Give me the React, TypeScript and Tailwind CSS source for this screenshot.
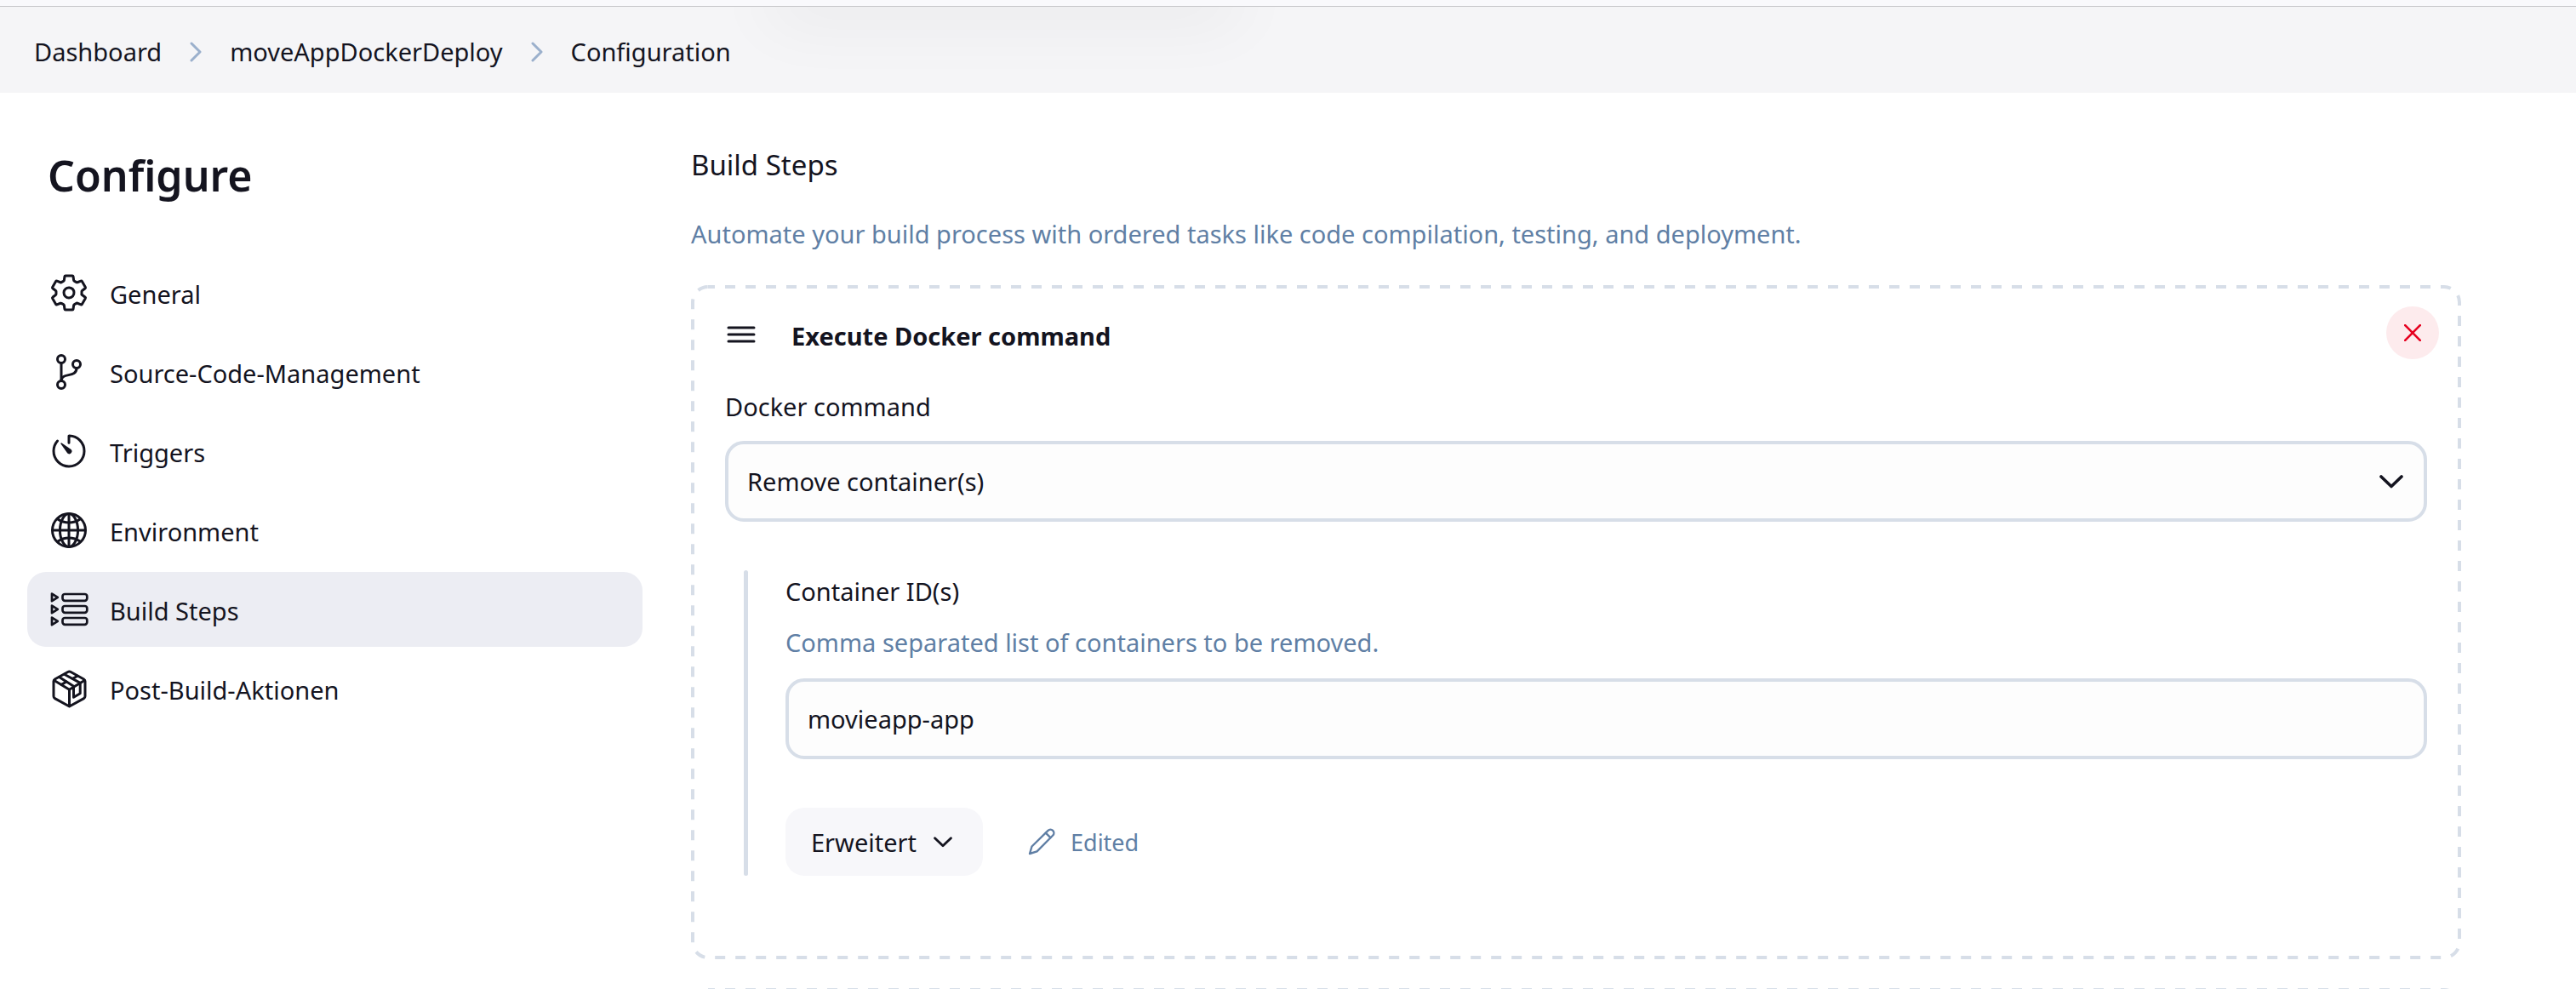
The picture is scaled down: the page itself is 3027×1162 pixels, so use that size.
import type { ReactNode } from 'react'
import {
  IoGitBranchOutline,
  IoGlobeOutline,
  IoSettingsOutline,
  IoTimerOutline,
} from 'react-icons/io5'

function Chevron({ direction, className }: { direction: 'right' | 'down'; className: string }) {
  return direction === 'right' ? (
    <svg viewBox="0 0 14 24" className={className} fill="none" stroke="currentColor" strokeWidth="3" strokeLinecap="round" strokeLinejoin="round" aria-hidden="true">
      <path d="M2 2l10 10L2 22" />
    </svg>
  ) : (
    <svg viewBox="0 0 28 16" className={className} fill="none" stroke="currentColor" strokeWidth="3.6" strokeLinecap="round" strokeLinejoin="round" aria-hidden="true">
      <path d="M2 2l12 11.5L26 2" />
    </svg>
  )
}

function StepsIcon() {
  return (
    <svg viewBox="0 0 48 48" className="size-12" fill="none" stroke="currentColor" strokeWidth="2.7" strokeLinejoin="round" aria-hidden="true">
      {[0, 14, 28].map((y) => (
        <g key={y} transform={`translate(0 ${y})`}>
          <path d="M4 5.600L10.800 9.900L4 14.200z" />
          <rect x="16.5" y="6" width="28.8" height="7.8" rx="2.8" />
        </g>
      ))}
    </svg>
  )
}

function PackageIcon() {
  return (
    <svg viewBox="0 0 48 48" className="size-12" fill="none" stroke="currentColor" strokeWidth="3" strokeLinecap="round" strokeLinejoin="round" aria-hidden="true">
      <path d="M22.800 4.500L7.500 13a3 3 0 0 0-1.500 2.600V33a3 3 0 0 0 1.500 2.600L24.500 45L41.500 35.600A3 3 0 0 0 43 33V15.600A3 3 0 0 0 41.500 13L26.200 4.500a3.500 3.500 0 0 0-3.400 0z" />
      <path d="M6.800 14.500L24.500 25.200L42.200 14.500M24.500 25.200V44" />
      <path d="M12.600 10.500L29.500 21.200V34.200L37.200 29.800V17.400L18.600 7.200" />
      <path d="M15.200 19.400L21 16M28.500 12.200L34 9.200" />
    </svg>
  )
}

function PencilIcon() {
  return (
    <svg viewBox="0 0 32 32" className="size-8" fill="none" stroke="currentColor" strokeWidth="2.4" strokeLinecap="round" strokeLinejoin="round" aria-hidden="true">
      <path d="M2 30L4.500 21.500L23.500 2.800a4 4 0 0 1 5.700 5.700L10.500 27.300z" />
      <path d="M20.800 5.600L26.400 11.200" />
    </svg>
  )
}

/* Long-dash outline drawn over a card's edge; CSS dashes are too short for it. */
function DashedOutline() {
  return (
    <svg className="pointer-events-none absolute inset-0 size-full overflow-hidden" aria-hidden="true">
      <rect
        x="2"
        y="2"
        rx="18"
        className="h-[calc(100%-4px)] w-[calc(100%-4px)] fill-none stroke-[#d7dee8] stroke-4"
        strokeDasharray="12 12"
        strokeDashoffset="4"
      />
    </svg>
  )
}

const navItems: { label: string; icon: ReactNode; active?: boolean }[] = [
  { label: 'General', icon: <IoSettingsOutline className="size-12" /> },
  { label: 'Source-Code-Management', icon: <IoGitBranchOutline className="size-12" /> },
  { label: 'Triggers', icon: <IoTimerOutline className="size-12" /> },
  { label: 'Environment', icon: <IoGlobeOutline className="size-12" /> },
  { label: 'Build Steps', icon: <StepsIcon />, active: true },
  { label: 'Post-Build-Aktionen', icon: <PackageIcon /> },
]

const crumbs = ['Dashboard', 'moveAppDockerDeploy', 'Configuration']

export default function App() {
  return (
    <div className="h-screen overflow-hidden bg-white font-['Noto_Sans',sans-serif] text-[29px] leading-10 text-[#14141f]">
      <div className="h-2 border-b border-[#c8c8cb] bg-[#f9f9fc]" />
      <header className="relative overflow-hidden bg-[#f5f5f7] pt-[33px] pb-7 pl-10">
        <span className="absolute -top-10 left-[900px] h-10 w-[560px] rounded-full shadow-[0_12px_80px_rgba(0,0,0,0.07)]" />
        <nav aria-label="Breadcrumb">
          <ol className="flex items-center gap-[33px]">
            {crumbs.map((crumb, i) => (
              <li key={crumb} className="flex items-center gap-[33px]">
                {i > 0 && <Chevron direction="right" className="h-6 w-[14px] text-[#9bb0cc]" />}
                <a href="#">{crumb}</a>
              </li>
            ))}
          </ol>
        </nav>
      </header>

      <div className="flex gap-[57px] pr-[135px] pl-8">
        <aside className="w-[723px] shrink-0 pt-[65px]">
          <h1 className="pl-6 text-[50px] leading-16 font-semibold">Configure</h1>
          <nav className="mt-[62px] flex flex-col gap-[5px]" aria-label="Configure">
            {navItems.map((item) => (
              <a
                key={item.label}
                href="#"
                aria-current={item.active ? 'true' : undefined}
                className={
                  item.active
                    ? 'flex h-[88px] items-center gap-6 rounded-[22px] bg-[#ecedf3] pl-[25px]'
                    : 'flex h-[88px] items-center gap-6 rounded-[22px] pl-[25px]'
                }
              >
                {item.icon}
                <span className="pt-1">{item.label}</span>
              </a>
            ))}
          </nav>
        </aside>

        <main className="min-w-0 flex-1 pt-[61px]">
          <h2 className="text-[33px] leading-12">Build Steps</h2>
          <p className="mt-[37px] text-[#607fa5]">
            Automate your build process with ordered tasks like code compilation, testing, and deployment.
          </p>

          <section className="relative mt-10 px-10 pt-[25px] pb-[98px]">
            <DashedOutline />
            <div className="flex items-center">
              <button type="button" aria-label="Drag to reorder" className="flex h-10 w-[38px] items-center justify-center pt-1">
                <svg viewBox="0 0 34 20" className="h-5 w-[34px]" fill="none" stroke="currentColor" strokeWidth="3" strokeLinecap="round" aria-hidden="true">
                  <path d="M2 2h30M2 10h30M2 18h30" />
                </svg>
              </button>
              <h3 className="ml-10 pt-2 font-bold">Execute Docker command</h3>
              <button
                type="button"
                aria-label="Delete build step"
                className="-mr-[14px] ml-auto flex size-[62px] items-center justify-center rounded-full bg-[#fdebed] text-[#e6001f]"
              >
                <svg viewBox="0 0 20 20" className="size-5" fill="none" stroke="currentColor" strokeWidth="2.6" strokeLinecap="round" aria-hidden="true">
                  <path d="M1.200 1.200l17.600 17.600M18.800 1.200L1.200 18.800" />
                </svg>
              </button>
            </div>

            <label htmlFor="docker-command" className="mt-9 block">Docker command</label>
            <div className="relative mt-5">
              <select
                id="docker-command"
                className="block h-[95px] w-full appearance-none rounded-[22px] border-4 border-[#d7dee8] bg-[#fdfdfd] px-[22px]"
                defaultValue="remove"
              >
                <option value="remove">Remove container(s)</option>
              </select>
              <Chevron direction="down" className="pointer-events-none absolute top-10 right-7 h-4 w-7" />
            </div>

            <div className="mt-[57px] ml-[22px] flex gap-11">
              <div className="w-[5px] shrink-0 rounded-full bg-[#d7dee8]" />
              <div className="min-w-0 flex-1 pt-[5px]">
                <label htmlFor="container-ids" className="block">Container ID(s)</label>
                <p id="container-ids-help" className="mt-5 text-[#607fa5]">
                  Comma separated list of containers to be removed.
                </p>
                <input
                  id="container-ids"
                  type="text"
                  defaultValue="movieapp-app"
                  aria-describedby="container-ids-help"
                  className="mt-[22px] block h-[95px] w-full rounded-[22px] border-4 border-[#d7dee8] bg-[#fdfdfd] px-[22px]"
                />
                <div className="mt-[57px] flex items-center">
                  <button type="button" className="flex h-20 items-center gap-5 rounded-[22px] bg-[#f7f7fa] pr-9 pl-[30px]">
                    <span className="pt-0.5">Erweitert</span>
                    <Chevron direction="down" className="h-[13px] w-[22px]" />
                  </button>
                  <span className="ml-[53px] flex items-center gap-[18px] text-[27px] text-[#607fa5]">
                    <PencilIcon />
                    <span className="pt-0.5">Edited</span>
                  </span>
                </div>
              </div>
            </div>
          </section>

          <section className="relative mt-[34px] h-40" aria-label="Next build step">
            <DashedOutline />
          </section>
        </main>
      </div>
    </div>
  )
}
